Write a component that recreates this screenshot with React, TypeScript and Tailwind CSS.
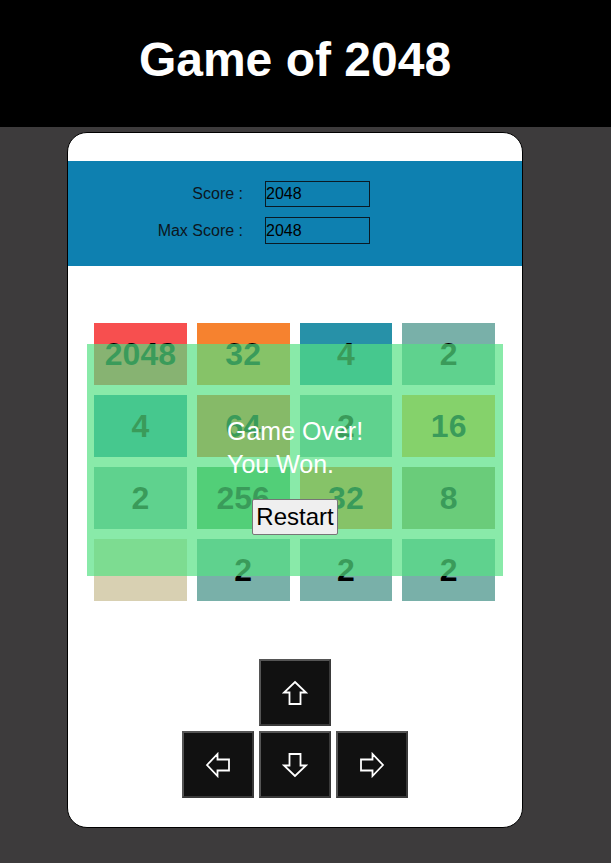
import React from "react";

const TILE_COLORS: Record<number, string> = {
  0: "bg-[#d8d0b2]",
  2: "bg-[#79b0a9]",
  4: "bg-[#2791a8]",
  8: "bg-[#9b9e67]",
  16: "bg-[#f2b237]",
  32: "bg-[#f6822f]",
  64: "bg-[#f6652d]",
  256: "bg-[#4da861]",
  2048: "bg-[#f74f4f]",
};

const BOARD = [
  [2048, 32, 4, 2],
  [4, 64, 2, 16],
  [2, 256, 32, 8],
  [0, 2, 2, 2],
];

function Arrow({ rotate }: { rotate: number }) {
  return (
    <svg width="26" height="26" viewBox="0 0 26 26" style={{ transform: `rotate(${rotate}deg)` }}>
      <path
        d="M13 2 L24 12.5 L18.5 12.5 L18.5 24 L7.5 24 L7.5 12.5 L2 12.5 Z"
        fill="none"
        stroke="white"
        strokeWidth="1.8"
        strokeLinejoin="miter"
      />
    </svg>
  );
}

function ArrowKey({ rotate }: { rotate: number }) {
  return (
    <button className="w-[72px] h-[67px] bg-[#111111] border-2 border-t-[#555] border-l-[#555] border-b-[#3a3a3a] border-r-[#3a3a3a] flex items-center justify-center">
      <Arrow rotate={rotate} />
    </button>
  );
}

export default function App() {
  return (
    <div className="min-h-[863px] bg-[#3d3b3c]" style={{ fontFamily: "'Liberation Sans', Arial, sans-serif" }}>
      {/* Header */}
      <div className="h-[127px] bg-black">
        <h1 className="w-[590px] pt-[36px] text-center text-[48px] leading-[48px] font-bold text-white">
          Game of 2048
        </h1>
      </div>

      <div className="w-[590px] pt-[5px] flex justify-center">
        {/* Card */}
        <div className="w-[456px] h-[696px] bg-white border border-black rounded-[20px] overflow-hidden pt-[28px]">
          {/* Scores */}
          <div className="h-[105px] bg-[#0e80b0] pt-[20px] flex flex-col gap-[10px]">
            <div className="flex items-center pl-[85px]">
              <label className="w-[90px] text-right text-[16px] text-[#0c1620]">Score :</label>
              <input
                readOnly
                value="2048"
                className="ml-[22px] w-[105px] h-[26px] border border-[#0a1a24] bg-transparent px-0 text-[16px] leading-[24px] text-black outline-none"
              />
            </div>
            <div className="flex items-center pl-[85px]">
              <label className="w-[90px] text-right text-[16px] text-[#0c1620]">Max Score :</label>
              <input
                readOnly
                value="2048"
                className="ml-[22px] w-[105px] h-[27px] border border-[#0a1a24] bg-transparent px-0 text-[16px] leading-[25px] text-black outline-none"
              />
            </div>
          </div>

          {/* Board */}
          <div className="relative w-[401px] ml-[26px] mt-[57px]">
            <div className="grid grid-cols-4 gap-[10px]">
              {BOARD.flat().map((v, i) => (
                <div
                  key={i}
                  className={`h-[62px] flex items-center justify-center text-[32px] font-bold text-black ${TILE_COLORS[v]}`}
                >
                  {v === 0 ? "" : v}
                </div>
              ))}
            </div>

            {/* Game over overlay */}
            <div className="absolute left-[-7px] top-[21px] w-[416px] h-[232px] bg-[rgba(84,224,130,0.69)] flex flex-col">
              <div className="pl-[140px] pt-[71px] text-[25px] leading-[33px] text-white">
                <div>Game Over!</div>
                <div>You Won.</div>
              </div>
              <div className="flex justify-center mt-[18px]">
                <button className="h-[36px] px-[3px] bg-[#efefef] border border-[#767676] rounded-[2px] text-[24px] leading-[28px] text-black">
                  Restart
                </button>
              </div>
            </div>
          </div>

          {/* Controls */}
          <div className="mt-[58px] flex flex-col items-center gap-[5px]">
            <ArrowKey rotate={0} />
            <div className="flex gap-[5px]">
              <ArrowKey rotate={-90} />
              <ArrowKey rotate={180} />
              <ArrowKey rotate={90} />
            </div>
          </div>
        </div>
      </div>
    </div>
  );
}
